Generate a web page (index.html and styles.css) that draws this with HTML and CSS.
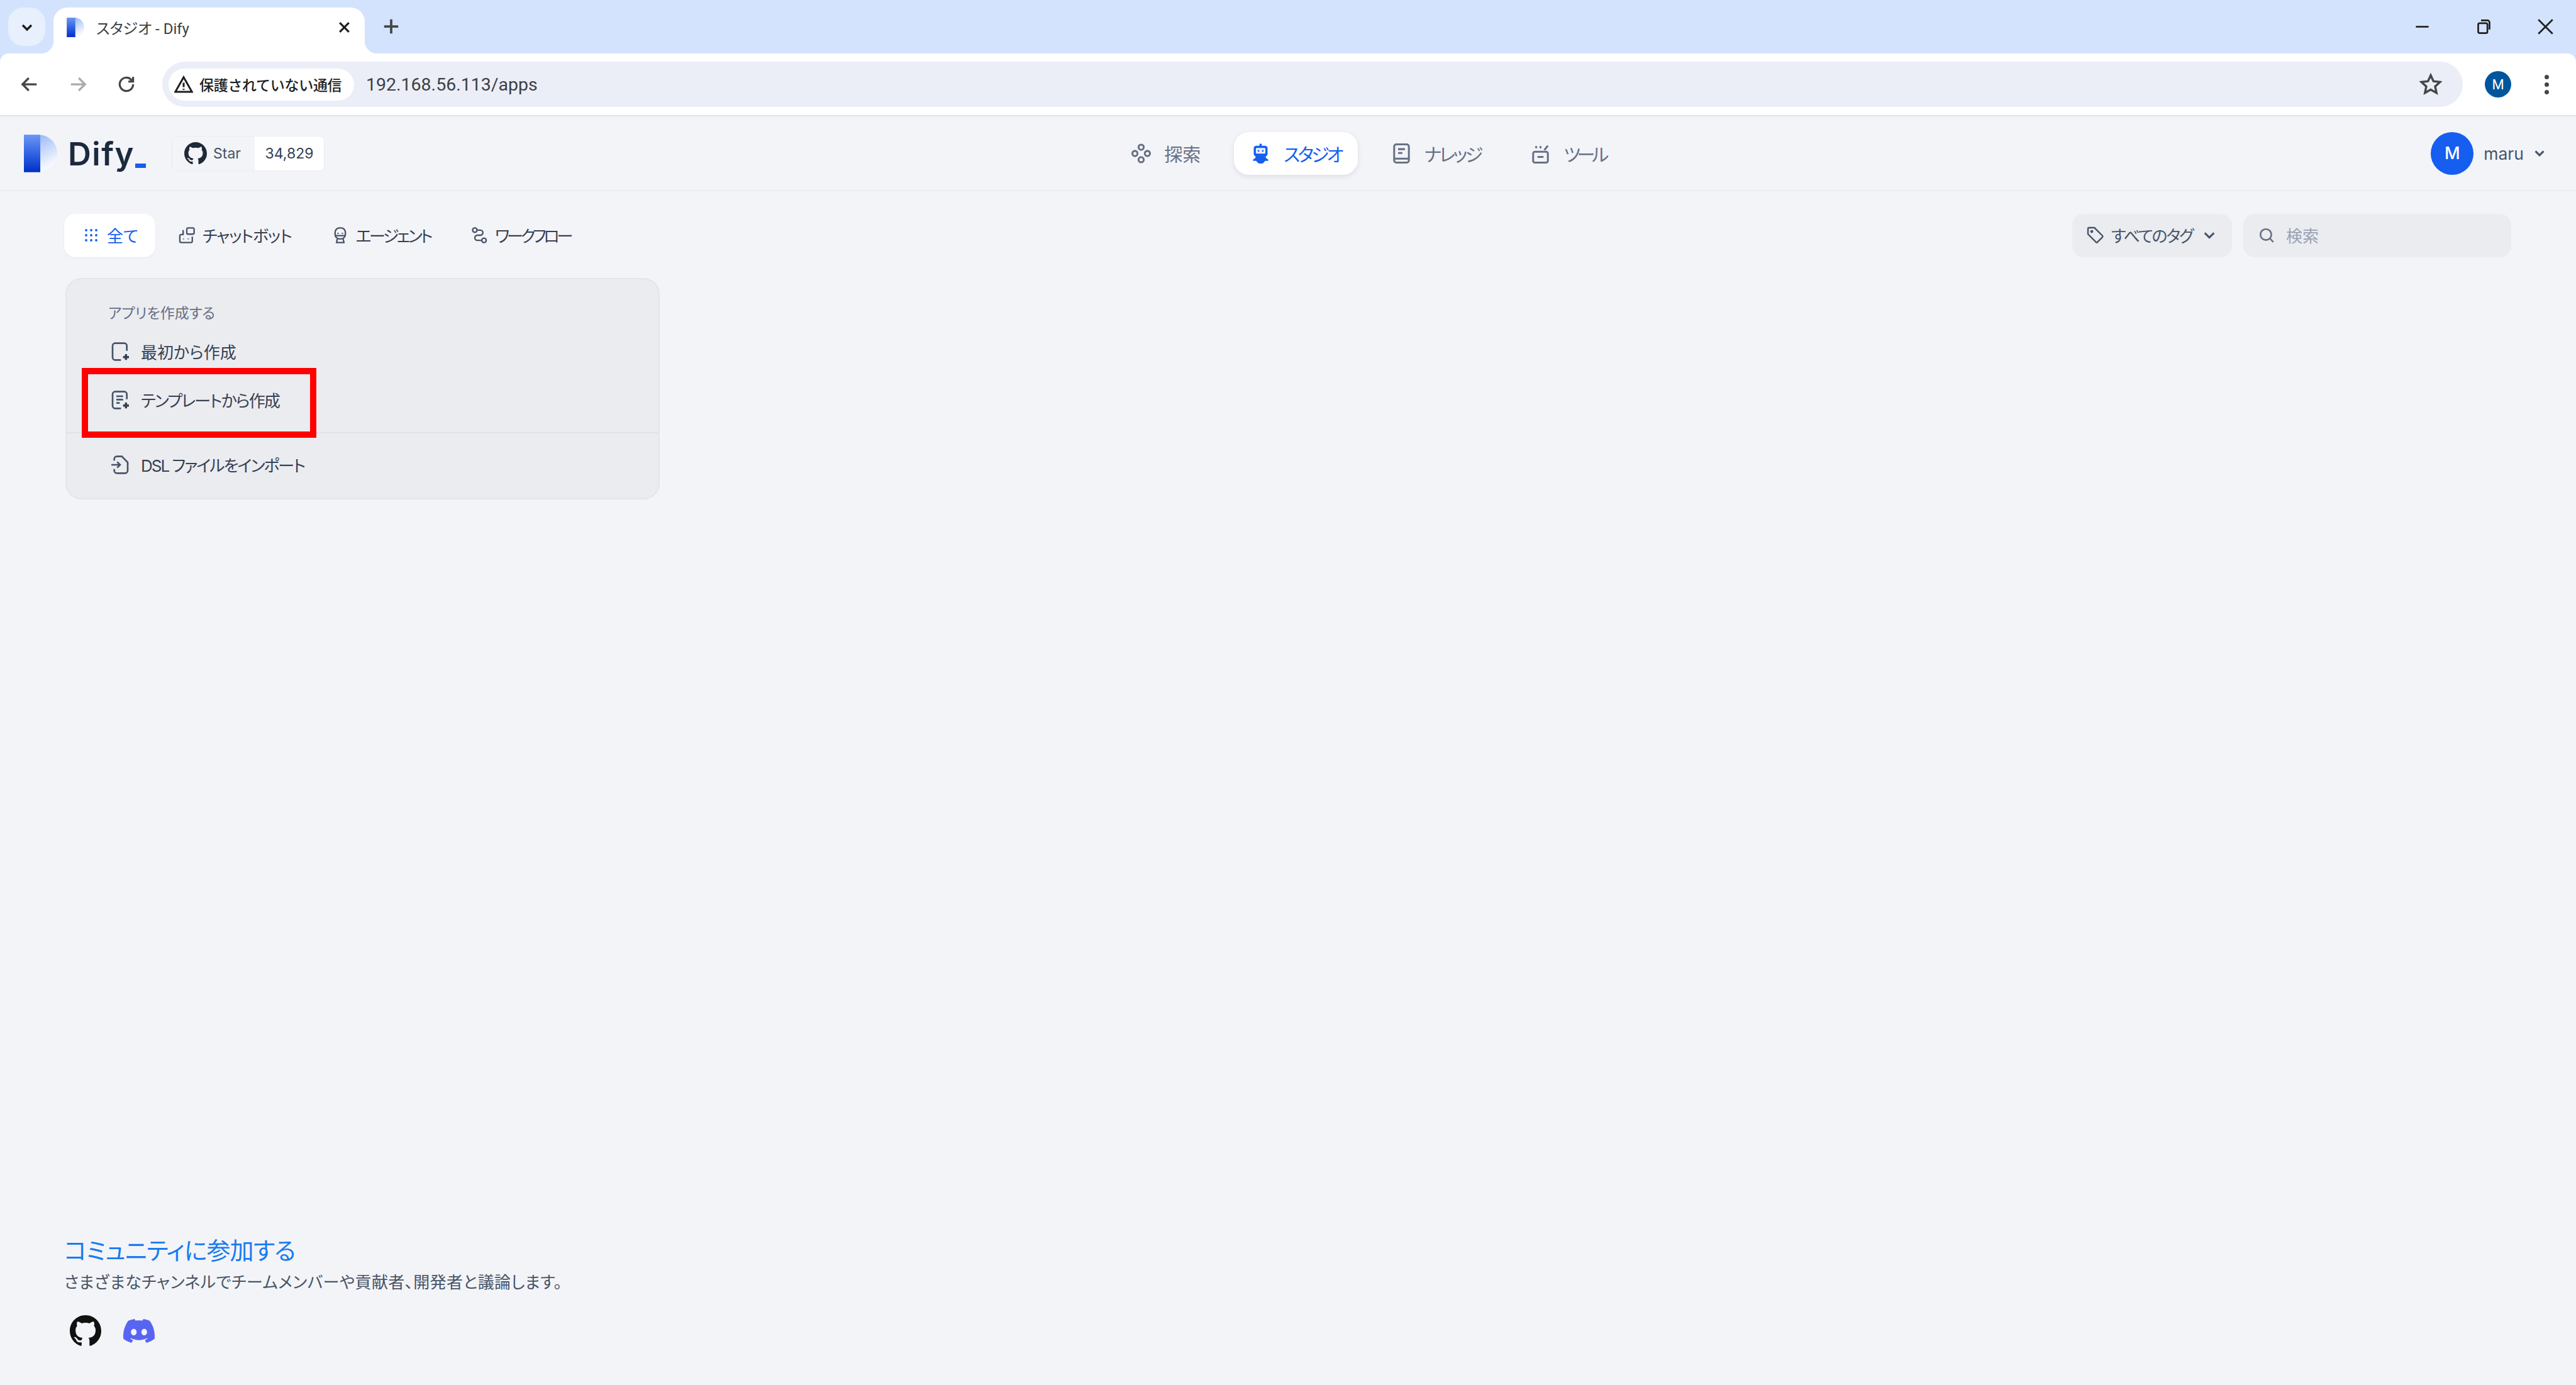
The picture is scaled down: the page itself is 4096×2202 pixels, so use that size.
FILE: index.html
```html
<!DOCTYPE html>
<html lang="ja">
<head>
<meta charset="utf-8">
<title>スタジオ - Dify</title>
<link rel="stylesheet" href="styles.css">
</head>
<body>
<svg class="defs" width="0" height="0" aria-hidden="true">
  <defs>
    <linearGradient id="bowl" x1="0.25" y1="0" x2="0.75" y2="1"><stop offset="0" stop-color="#8fb2f7"/><stop offset="0.85" stop-color="#f4f7fe"/></linearGradient>
    <linearGradient id="bar" x1="0" y1="0" x2="0" y2="1"><stop offset="0" stop-color="#6c97f3"/><stop offset="0.55" stop-color="#2c5ee0"/><stop offset="1" stop-color="#0030c8"/></linearGradient>
    <symbol id="dlogo" viewBox="0 0 57 64"><path d="M0 0h24c19 0 33 14 33 32S43 64 24 64H0z" fill="url(#bowl)"/><rect width="28" height="64" fill="url(#bar)"/></symbol>
    <symbol id="gh" viewBox="0 0 16 16"><path fill="currentColor" d="M8 0C3.58 0 0 3.58 0 8c0 3.54 2.29 6.53 5.47 7.59.4.07.55-.17.55-.38 0-.19-.01-.82-.01-1.49-2.01.37-2.53-.49-2.69-.94-.09-.23-.48-.94-.82-1.13-.28-.15-.68-.52-.01-.53.63-.01 1.08.58 1.23.82.72 1.21 1.87.87 2.33.66.07-.52.28-.87.51-1.07-1.78-.2-3.64-.89-3.64-3.95 0-.87.31-1.59.82-2.15-.08-.2-.36-1.02.08-2.12 0 0 .67-.21 2.2.82.64-.18 1.32-.27 2-.27.68 0 1.36.09 2 .27 1.53-1.04 2.2-.82 2.2-.82.44 1.1.16 1.92.08 2.12.51.56.82 1.27.82 2.15 0 3.07-1.87 3.75-3.65 3.95.29.25.54.73.54 1.48 0 1.07-.01 1.93-.01 2.2 0 .21.15.46.55.38A8.013 8.013 0 0016 8c0-4.42-3.58-8-8-8z"/></symbol>
  </defs>
</svg>

<div class="browser">
  <div class="tabstrip">
    <button class="tabsearch"><svg class="ic-sm" viewBox="0 0 24 24"><path d="M5 9l7 7 7-7"/></svg></button>
    <div class="tab">
      <svg class="favicon"><use href="#dlogo"/></svg>
      <span class="tabtitle">スタジオ - Dify</span>
      <svg class="tabclose" viewBox="0 0 24 24"><path d="M5 5l14 14M19 5L5 19"/></svg>
    </div>
    <svg class="newtab" viewBox="0 0 24 24"><path d="M12 3v18M3 12h18"/></svg>
    <div class="winctl">
      <span class="winbtn"><svg viewBox="0 0 24 24"><path d="M3 12h18"/></svg></span>
      <span class="winbtn"><svg viewBox="0 0 24 24"><rect x="4" y="7" width="13" height="14" rx="2"/><path d="M8 3h9a3 3 0 0 1 3 3v10"/></svg></span>
      <span class="winbtn"><svg viewBox="0 0 24 24"><path d="M2 2l20 20M22 2L2 22"/></svg></span>
    </div>
  </div>
  <div class="toolbar">
    <span class="tbtn"><svg viewBox="0 0 24 24"><path d="M21 12H4M11 4l-8 8 8 8"/></svg></span>
    <span class="tbtn tbtn-off"><svg viewBox="0 0 24 24"><path d="M3 12h17M13 4l8 8-8 8"/></svg></span>
    <span class="tbtn"><svg viewBox="0 0 24 24"><path d="M20.5 12a8.5 8.5 0 1 1-2.6-6.1L20.5 8.500M20.500 2.500v6h-6"/></svg></span>
    <div class="omnibox">
      <div class="secure">
        <svg class="warn" viewBox="0 0 24 24"><path d="M12 3L1.500 21.500h21zM12 10v5.500M12 17.500v1.500"/></svg>
        <span class="securetext">保護されていない通信</span>
      </div>
      <span class="url">192.168.56.113/apps</span>
      <svg class="star" viewBox="0 0 24 24"><path d="M12 2.500l2.900 6.300 6.900.8-5.100 4.700 1.400 6.800-6.100-3.400-6.100 3.400 1.400-6.800-5.100-4.700 6.900-.8z"/></svg>
    </div>
    <span class="profile">M</span>
    <span class="kebab"><i></i><i></i><i></i></span>
  </div>
</div>

<header class="appbar">
  <div class="brand">
    <svg class="logo"><use href="#dlogo"/></svg>
    <span class="wordmark">Dify</span><span class="wordmark-dot"></span>
    <div class="ghstar">
      <span class="ghstar-l"><svg class="ghstar-ic"><use href="#gh"/></svg><span>Star</span></span>
      <span class="ghstar-r">34,829</span>
    </div>
  </div>
  <nav class="mainnav">
    <a class="navitem">
      <svg class="navic" viewBox="0 0 24 24"><circle cx="12" cy="4.800" r="3"/><circle cx="4.800" cy="12" r="3"/><circle cx="19.200" cy="12" r="3"/><circle cx="12" cy="19.200" r="3"/></svg>
      <span class="t-explore">探索</span>
    </a>
    <a class="navitem navitem-on">
      <svg class="navic-fill" viewBox="0 0 24 24"><circle cx="12" cy="2" r="1.400" fill="#155eef"/><rect x="4" y="3" width="16" height="12.500" rx="3" fill="#155eef"/><rect x="6.500" y="5.700" width="11" height="6.500" rx="1" fill="#e8effd"/><circle cx="9.500" cy="9" r="1" fill="#155eef"/><circle cx="14.500" cy="9" r="1" fill="#155eef"/><path d="M6 15h12v2l3 2.200-.5 1.300H17a5.500 5.500 0 0 1-10 0H3.500L3 19.200 6 17z" fill="#155eef"/></svg>
      <span class="t-studio">スタジオ</span>
    </a>
    <a class="navitem">
      <svg class="navic" viewBox="0 0 24 24"><rect x="3.500" y="1.500" width="17" height="21" rx="2.500"/><path d="M8 7h8M8 11.500h5M4 18h16"/></svg>
      <span class="t-know">ナレッジ</span>
    </a>
    <a class="navitem">
      <svg class="navic" viewBox="0 0 24 24"><rect x="3.500" y="10" width="17" height="12.500" rx="2"/><path d="M8.500 16h7M7 3.500v2.500M12 3.500v2.500M16.500 8l4-5"/></svg>
      <span class="t-tool">ツール</span>
    </a>
  </nav>
  <div class="account">
    <span class="avatar">M</span>
    <span class="username">maru</span>
    <svg class="chev" viewBox="0 0 24 24"><path d="M5 8l7 7 7-7"/></svg>
  </div>
</header>

<main class="content">
  <div class="filters">
    <div class="tabs">
      <a class="ftab ftab-on">
        <svg class="fic" viewBox="0 0 28 28"><g class="griddots"><circle cx="6" cy="6" r="1.900"/><circle cx="14" cy="6" r="1.900"/><circle cx="22" cy="6" r="1.900"/><circle cx="6" cy="14" r="1.900"/><circle cx="14" cy="14" r="1.900"/><circle cx="22" cy="14" r="1.900"/><circle cx="6" cy="22" r="1.900"/><circle cx="14" cy="22" r="1.900"/><circle cx="22" cy="22" r="1.900"/></g></svg>
        <span class="t-all">全て</span>
      </a>
      <a class="ftab">
        <svg class="fic fic-line" viewBox="0 0 24 24"><rect x="12" y="2" width="10" height="8.500" rx="2"/><path d="M8 11H4.500A2 2 0 0 0 2.500 13v7a2 2 0 0 0 2 2h13a2 2 0 0 0 2-2v-6M7 5v6M7.500 16.500v1M14 16.500v1"/></svg>
        <span class="t-chat">チャットボット</span>
      </a>
      <a class="ftab">
        <svg class="fic fic-line" viewBox="0 0 24 24"><rect x="5" y="2" width="14" height="15" rx="6"/><path d="M9 8.500v1.500M15 8.500v1.500M5.500 12.500h13M8 17l-1 5h10l-1-5"/></svg>
        <span class="t-agent">エージェント</span>
      </a>
      <a class="ftab">
        <svg class="fic fic-line" viewBox="0 0 24 24"><circle cx="6" cy="5" r="3"/><circle cx="18.500" cy="19" r="3"/><path d="M9.500 5h4a3.500 3.500 0 0 1 0 7h-4a3.500 3.500 0 0 0 0 7h5"/></svg>
        <span class="t-flow">ワークフロー</span>
      </a>
    </div>
    <div class="filter-right">
      <div class="tagbtn">
        <svg class="tagic" viewBox="0 0 24 24"><path d="M2.500 4a1.500 1.500 0 0 1 1.500-1.500h7l10.500 10.500a1.500 1.500 0 0 1 0 2l-6.500 6.500a1.500 1.500 0 0 1-2 0L2.500 11z"/><circle cx="7.500" cy="7.500" r="1" /></svg>
        <span class="t-tag">すべてのタグ</span>
        <svg class="chev chev-tag" viewBox="0 0 24 24"><path d="M4 8l8 8 8-8"/></svg>
      </div>
      <div class="searchbox">
        <svg class="searchic" viewBox="0 0 24 24"><circle cx="11" cy="11" r="8"/><path d="M22 22l-5-5"/></svg>
        <span class="placeholder">検索</span>
      </div>
    </div>
  </div>

  <section class="createcard">
    <div class="cardtop">
      <div class="cardtitle">アプリを作成する</div>
      <div class="cardrow">
        <svg class="rowic" viewBox="0 0 24 24"><path d="M20 11V5a3 3 0 0 0-3-3H6a3 3 0 0 0-3 3v14a3 3 0 0 0 3 3h7"/><path class="plus" d="M19 15v7M15.500 18.500h7"/></svg>
        <span class="t-blank">最初から作成</span>
      </div>
      <div class="cardrow">
        <svg class="rowic" viewBox="0 0 24 24"><path d="M20 11V5a3 3 0 0 0-3-3H6a3 3 0 0 0-3 3v14a3 3 0 0 0 3 3h7"/><path d="M7.500 7.500h8M7.500 11.500h8M7.500 15.500h4"/><path class="plus" d="M19 15v7M15.500 18.500h7"/></svg>
        <span class="t-tmpl">テンプレートから作成</span>
      </div>
    </div>
    <div class="cardbottom">
      <div class="cardrow">
        <svg class="rowic" viewBox="0 0 24 24"><path d="M5 7V5a3 3 0 0 1 3-3h6l7 7v10a3 3 0 0 1-3 3H8a3 3 0 0 1-3-3v-2"/><path d="M1.500 12H12M8.500 8.500L12 12l-3.500 3.500"/></svg>
        <span class="t-dsl">DSL ファイルをインポート</span>
      </div>
    </div>
    <div class="redmark"></div>
  </section>

  <footer class="community">
    <h3 class="commtitle">コミュニティに参加する</h3>
    <p class="commsub">さまざまなチャンネルでチームメンバーや貢献者、開発者と議論します。</p>
    <div class="commicons">
      <svg class="commgh"><use href="#gh"/></svg>
      <svg class="commdc" viewBox="0 0 16 16"><path fill="#5865f2" d="M13.545 2.907a13.2 13.2 0 0 0-3.257-1.011.05.05 0 0 0-.052.025c-.141.25-.297.577-.406.833a12.2 12.2 0 0 0-3.658 0 8 8 0 0 0-.412-.833.05.05 0 0 0-.052-.025c-1.125.194-2.22.534-3.257 1.011a.04.04 0 0 0-.021.018C.356 6.024-.213 9.047.066 12.032q.003.022.021.037a13.3 13.3 0 0 0 3.995 2.02.05.05 0 0 0 .056-.019q.463-.63.818-1.329a.05.05 0 0 0-.01-.059l-.018-.011a9 9 0 0 1-1.248-.595.05.05 0 0 1-.02-.066l.015-.019q.127-.095.248-.195a.05.05 0 0 1 .051-.007c2.619 1.196 5.454 1.196 8.041 0a.05.05 0 0 1 .053.007q.121.1.248.195a.05.05 0 0 1-.004.085 8 8 0 0 1-1.249.594.05.05 0 0 0-.03.03.05.05 0 0 0 .003.041c.24.465.515.909.817 1.329a.05.05 0 0 0 .056.019 13.2 13.2 0 0 0 4.001-2.02.05.05 0 0 0 .021-.037c.334-3.451-.559-6.449-2.366-9.106a.03.03 0 0 0-.02-.019m-8.198 7.307c-.789 0-1.438-.724-1.438-1.612s.637-1.613 1.438-1.613c.807 0 1.45.73 1.438 1.613 0 .888-.637 1.612-1.438 1.612m5.316 0c-.788 0-1.438-.724-1.438-1.612s.637-1.613 1.438-1.613c.807 0 1.451.73 1.438 1.613 0 .888-.631 1.612-1.438 1.612"/></svg>
    </div>
  </footer>
</main>
</body>
</html>
```

FILE: styles.css
```css
* { box-sizing: border-box; }
html, body { margin: 0; height: 100%; }
body {
  display: flex;
  flex-direction: column;
  height: 2202px;
  overflow: hidden;
  background: #f3f4f8;
  font-family: Inter, "Noto Sans CJK JP", sans-serif;
  font-feature-settings: "palt";
  color: #354052;
}
svg { display: block; flex: none; }
.defs { position: absolute; }

/* browser chrome */
.browser { background: #d3e3fd; flex: none; }
.tabstrip { display: flex; height: 85px; padding-left: 13px; align-items: flex-start; }
.tabsearch { width: 59px; height: 61px; margin-top: 12px; border: 0; padding: 0; border-radius: 24px; background: #e8f0fd; display: flex; align-items: center; justify-content: center; }
.ic-sm { width: 24px; height: 24px; fill: none; stroke: #1f1f1f; stroke-width: 3.5; }
.tab { position: relative; width: 495px; height: 73px; margin-top: 12px; margin-left: 13px; background: #fff; border-radius: 22px 22px 0 0; display: flex; align-items: center; padding: 0 20px 10px 21px; }
.tab::before, .tab::after { content: ""; position: absolute; bottom: 0; width: 20px; height: 20px; }
.tab::before { left: -20px; background: radial-gradient(circle at 0 0, #d3e3fd 20px, #fff 20.5px); }
.tab::after { right: -20px; background: radial-gradient(circle at 100% 0, #d3e3fd 20px, #fff 20.5px); }
.favicon { width: 28px; height: 31px; }
.tabtitle { margin-left: 19px; font: 400 24px "Roboto", "Noto Sans CJK JP", sans-serif; font-feature-settings: "palt"; color: #3c4043; white-space: nowrap; }
.tabclose { margin-left: auto; width: 25px; height: 25px; fill: none; stroke: #1f1f1f; stroke-width: 3; }
.newtab { width: 30px; height: 30px; margin: 27px 0 0 27px; fill: none; stroke: #444746; stroke-width: 3; }
.winctl { margin-left: auto; display: flex; }
.winbtn { width: 98px; height: 85px; display: flex; align-items: center; justify-content: center; }
.winbtn svg { width: 27px; height: 27px; fill: none; stroke: #1f1f1f; stroke-width: 2.400; }

.toolbar { display: flex; align-items: center; height: 100px; padding: 0 32px 0 8px; background: #fff; border-radius: 14px 14px 0 0; border-bottom: 2px solid #e0e2e6; }
.tbtn { width: 77px; display: flex; justify-content: center; }
.tbtn svg { width: 30px; height: 30px; fill: none; stroke: #444746; stroke-width: 2.600; }
.tbtn-off svg { stroke: #a8abaf; }
.omnibox { flex: 1; height: 72px; margin-left: 19px; padding: 0 33px 0 10px; border-radius: 36px; background: #ebeef7; display: flex; align-items: center; }
.secure { width: 295px; height: 51px; border-radius: 26px; background: #fff; display: flex; align-items: center; padding-left: 9px; }
.warn { width: 30px; height: 30px; fill: none; stroke: #1f1f1f; stroke-width: 2.400; }
.securetext { margin-left: 10px; font: 500 23px "Noto Sans CJK JP", sans-serif; color: #1f1f1f; white-space: nowrap; letter-spacing: -0.300px; }
.url { margin-left: 19px; font: 400 28.500px "Roboto", sans-serif; color: #3c4043; }
.star { margin-left: auto; width: 36px; height: 36px; fill: none; stroke: #444746; stroke-width: 2.300; }
.profile { width: 42px; height: 42px; margin-left: 35px; border-radius: 50%; background: #00569d; color: #fff; font: 400 22px "Roboto", sans-serif; display: flex; align-items: center; justify-content: center; }
.kebab { margin-left: 41px; width: 30px; display: flex; flex-direction: column; align-items: center; gap: 5px; }
.kebab i { width: 7px; height: 7px; border-radius: 50%; background: #444746; }

/* app header */
.appbar { flex: none; height: 119px; display: flex; align-items: center; justify-content: space-between; padding: 0 47px 0 38px; border-bottom: 2px solid #eceef2; }
.brand { display: flex; align-items: center; }
.logo { width: 53px; height: 60px; }
.wordmark { margin-left: 17px; font: 600 51px Inter, sans-serif; color: #1c2a3f; letter-spacing: 1.500px; line-height: 60px; padding-top: 3px; }
.wordmark-dot { width: 17px; height: 7px; margin: 40px 0 0 1px; background: #155eef; }
.ghstar { margin-left: 41px; height: 56px; display: flex; border: 1px solid #eaecf0; border-radius: 8px; overflow: hidden; font-size: 23px; }
.ghstar-l { width: 131px; display: flex; align-items: center; padding-left: 19px; gap: 10px; color: #475467; background: #f2f4f8; }
.ghstar-ic { width: 36px; height: 36px; color: #1f2937; }
.ghstar-r { width: 110px; display: flex; align-items: center; justify-content: center; background: #fff; color: #354052; }

.mainnav { display: flex; gap: 27px; margin-right: 30px; }
.navitem { height: 68px; padding: 0 26px; display: flex; align-items: center; gap: 20px; font-size: 29px; color: #667085; border-radius: 24px; white-space: nowrap; }
.navitem-on { color: #155eef; background: #fff; box-shadow: 0 3px 10px rgba(16, 24, 40, 0.09); }
.navic, .navic-fill { width: 33px; height: 36px; }
.navic { fill: none; stroke: #667085; stroke-width: 2.200; }
.t-studio { letter-spacing: -3.750px; }
.t-know { letter-spacing: -3.700px; }
.t-tool { letter-spacing: -5.200px; }

.account { display: flex; align-items: center; }
.avatar { width: 68px; height: 68px; border-radius: 50%; background: #155eef; color: #fff; font: 500 27px Inter, sans-serif; display: flex; align-items: center; justify-content: center; }
.username { margin-left: 16px; font-size: 26.500px; color: #475467; }
.chev { width: 22px; height: 22px; margin-left: 14px; fill: none; stroke: #475467; stroke-width: 3.400; }

/* content */
.content { flex: 1; display: flex; flex-direction: column; padding: 36px 103px 61px 102px; min-height: 0; }
.filters { display: flex; justify-content: space-between; height: 69px; }
.tabs { display: flex; gap: 7px; }
.ftab { height: 69px; padding: 0 27px 2px 29px; display: flex; align-items: center; gap: 11px; font-size: 26px; color: #354052; border-radius: 18px; white-space: nowrap; }
.ftab-on { color: #155eef; background: #fff; box-shadow: 0 1px 3px rgba(16, 24, 40, 0.06); }
.fic { width: 28px; height: 28px; }
.griddots { fill: #155eef; }
.fic-line { fill: none; stroke: #475467; stroke-width: 2; }
.t-chat { letter-spacing: -1.300px; }
.t-agent { letter-spacing: -3.400px; }
.t-flow { letter-spacing: -4.100px; }
.filter-right { display: flex; gap: 18px; }
.tagbtn { width: 254px; height: 69px; display: flex; align-items: center; padding: 0 0 2px 22px; border-radius: 18px; background: #eaecf0; font-size: 26px; color: #475467; white-space: nowrap; }
.tagic { width: 29px; height: 33px; fill: none; stroke: #475467; stroke-width: 2; }
.t-tag { margin-left: 11px; letter-spacing: -2.200px; }
.chev-tag { margin-left: 16px; }
.searchbox { width: 426px; height: 69px; display: flex; align-items: center; padding: 0 0 2px 24px; border-radius: 18px; background: #ebecf0; font-size: 26px; color: #98a2b3; }
.searchic { width: 26px; height: 26px; fill: none; stroke: #667085; stroke-width: 2.400; }
.placeholder { margin-left: 18px; }

.createcard { position: relative; margin: 33px 0 0 2px; width: 945px; height: 352px; border: 2px solid #e3e5ea; border-radius: 26px; background: #ebecf0; display: flex; flex-direction: column; }
.cardtop { height: 245px; padding-top: 32px; border-bottom: 2px solid #e0e2e7; }
.cardtitle { height: 44px; line-height: 44px; padding-left: 66px; font-size: 23px; color: #667085; }
.cardrow { height: 77px; display: flex; align-items: center; padding-left: 69px; gap: 17px; font-size: 26px; color: #354052; white-space: nowrap; }
.t-tmpl { letter-spacing: -1.800px; }
.t-dsl { letter-spacing: -2px; }
.cardbottom { flex: 1; display: flex; align-items: center; padding-bottom: 4px; }
.cardbottom .cardrow { height: auto; }
.rowic { width: 32px; height: 32px; fill: none; stroke: #475467; stroke-width: 2; }
.rowic .plus { stroke-width: 2.600; stroke: #354052; }
.redmark { position: absolute; left: 24px; top: 141px; width: 373px; height: 111px; border: 10px solid #ff0000; }

.community { margin-top: auto; }
.commtitle { margin: 0; font-weight: 400; font-size: 38px; line-height: 50px; color: #1a7bf0; white-space: nowrap; letter-spacing: -0.900px; }
.commsub { margin: 6px 0 0; font-size: 26px; line-height: 40px; color: #475467; white-space: nowrap; letter-spacing: 0.400px; }
.commicons { display: flex; align-items: center; margin: 32px 0 0 8px; gap: 32px; }
.commgh { width: 52px; height: 50px; color: #111; }
.commdc { width: 54px; height: 50px; }
```
